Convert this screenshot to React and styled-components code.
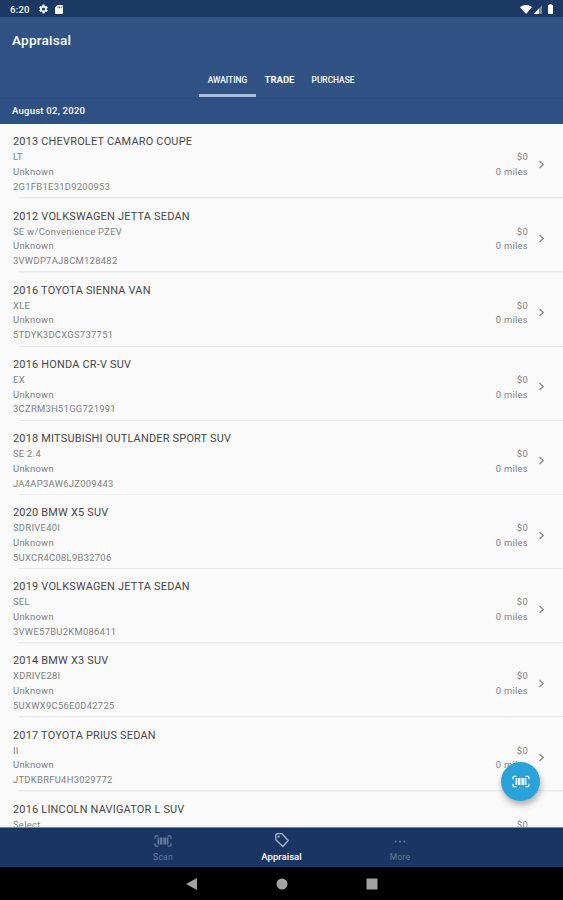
import React from 'react'
import styled, { createGlobalStyle, css } from 'styled-components'

const GlobalStyle = createGlobalStyle`
    body {
        margin: 0;
        background-color: #fafafa;
        font-family: Roboto, sans-serif;
    }
`

const Screen = styled.div`
    width: 563px;
    height: 900px;
    display: flex;
    flex-direction: column;
    overflow: hidden;
    position: relative;
`

const StatusBar = styled.div`
    height: 17px;
    flex: none;
    box-sizing: border-box;
    padding: 1px 9px 0 10px;
    display: flex;
    align-items: center;
    background-color: #1b3764;
    color: #fff;
    font-size: 9.6px;
    font-weight: 500;
    letter-spacing: 0.2px;
`

const StatusIcons = styled.div`
    display: flex;
    align-items: center;
    gap: ${props => props.gap};
    margin-left: ${props => props.offset};
`

const Header = styled.header`
    height: 80px;
    flex: none;
    display: flex;
    flex-direction: column;
    background-color: #305285;
    color: #fff;
`

const Title = styled.h1`
    margin: 0;
    padding-left: 12px;
    height: 48px;
    line-height: 47px;
    font-size: 13.6px;
    font-weight: 500;
    letter-spacing: 0.2px;
`

const Tabs = styled.div`
    height: 32px;
    display: flex;
    justify-content: center;
    padding-right: 1px;
`

const Tab = styled.div`
    box-sizing: border-box;
    width: ${props => props.width};
    height: 32px;
    line-height: 30px;
    text-align: center;
    font-size: 8.4px;
    font-weight: 500;
    white-space: nowrap;
    border-bottom: 3px solid transparent;

    ${props => props.active && css`
        border-bottom-color: #adbcd5;
    `}

    ${props => props.strong && css`
        font-weight: 700;
        font-size: 9.5px;
    `}
`

const DateHeader = styled.div`
    height: 27px;
    flex: none;
    box-sizing: border-box;
    padding-left: 12px;
    line-height: 26px;
    background-color: #2f5084;
    border-top: 1px solid #2b4c80;
    color: #fff;
    font-size: 9.6px;
    font-weight: 500;
    letter-spacing: 0.2px;
`

const List = styled.div`
    flex: 1;
    min-height: 0;
    box-sizing: border-box;
    padding-top: 0.6px;
    overflow: hidden;
    background-color: #fafafa;
`

const Row = styled.div`
    height: 74.15px;
    box-sizing: border-box;
    padding: 9.8px 18px 0 13px;
    display: flex;
    background: linear-gradient(#ebebeb, #ebebeb) 19px 100% / 100% 1.5px no-repeat;
    color: #808080;
    font-size: 9.4px;
    line-height: 14.8px;
    letter-spacing: 0.3px;
`

const Vehicle = styled.div`
    flex: 1;
    white-space: nowrap;
`

const Name = styled.div`
    height: 16px;
    line-height: 16px;
    color: #484848;
    font-size: 10.95px;
    letter-spacing: 0.2px;
`

const Values = styled.div`
    padding-top: 16px;
    margin-right: 10px;
    text-align: right;
`

const Chevron = styled.svg`
    width: 7px;
    height: 9px;
    margin-top: 25.5px;
    fill: none;
    stroke: #858585;
    stroke-width: 1.3;
`

const ScanButton = styled.button`
    position: absolute;
    left: 501px;
    top: 762px;
    width: 39px;
    height: 39px;
    padding: 0;
    border: none;
    border-radius: 50%;
    display: flex;
    align-items: center;
    justify-content: center;
    background-color: #29a3da;
    color: #e9f6fc;
    box-shadow: 1px 4px 6px rgba(0, 0, 0, 0.3);
`

const BottomNav = styled.nav`
    height: 40px;
    flex: none;
    box-sizing: border-box;
    border-top: 1px solid #7487a8;
    display: flex;
    justify-content: center;
    background-color: #1a3563;
`

const NavItem = styled.div`
    width: 118.5px;
    padding-top: 4px;
    display: flex;
    flex-direction: column;
    align-items: center;
    color: #64789c;
    font-size: 8.6px;
    line-height: 12px;
    letter-spacing: 0.2px;

    svg {
        height: 18px;
        margin-bottom: 1px;
    }

    ${props => props.active && css`
        color: #fff;
        font-size: 9.6px;
        font-weight: 500;
        letter-spacing: 0;

        svg {
            color: #a9b6cc;
        }
    `}
`

const SystemNav = styled.div`
    height: 33px;
    flex: none;
    box-sizing: border-box;
    display: flex;
    align-items: center;
    justify-content: center;
    gap: 78px;
    background-color: #000;
    color: #a3a3a3;
`

const vehicles = [
    { name: '2013 CHEVROLET CAMARO COUPE', trim: 'LT', vin: '2G1FB1E31D9200953' },
    { name: '2012 VOLKSWAGEN JETTA SEDAN', trim: 'SE w/Convenience PZEV', vin: '3VWDP7AJ8CM128482' },
    { name: '2016 TOYOTA SIENNA VAN', trim: 'XLE', vin: '5TDYK3DCXGS737751' },
    { name: '2016 HONDA CR-V SUV', trim: 'EX', vin: '3CZRM3H51GG721991' },
    { name: '2018 MITSUBISHI OUTLANDER SPORT SUV', trim: 'SE 2.4', vin: 'JA4AP3AW6JZ009443' },
    { name: '2020 BMW X5 SUV', trim: 'SDRIVE40I', vin: '5UXCR4C08L9B32706' },
    { name: '2019 VOLKSWAGEN JETTA SEDAN', trim: 'SEL', vin: '3VWE57BU2KM086411' },
    { name: '2014 BMW X3 SUV', trim: 'XDRIVE28I', vin: '5UXWX9C56E0D42725' },
    { name: '2017 TOYOTA PRIUS SEDAN', trim: 'II', vin: 'JTDKBRFU4H3029772' },
    { name: '2016 LINCOLN NAVIGATOR L SUV', trim: 'Select' },
]

function BarcodeIcon({ width = 18, height = 13 }) {
    return (
        <svg width={width} height={height} viewBox="0 0 17 12" fill="none" stroke="currentColor">
            <path d="M1 3.8V2.2q0-1 1-1h2.200M12.800 1.200H15q1 0 1 1v1.600M16 8.200v1.600q0 1-1 1h-2.200M4.200 10.800H2q-1 0-1-1V8.200" strokeWidth="1.2" />
            <path d="M4.100 2.800v6.400M12.900 2.800v6.400" strokeWidth="1.400" />
            <path d="M6.500 2.800v6.400M10.600 2.800v6.400" strokeWidth="2.200" />
            <path d="M8.600 2.800v6.400" strokeWidth="1" />
        </svg>
    )
}

function GearIcon() {
    return (
        <svg width="12" height="12" viewBox="0 0 24 24" fill="currentColor">
            <path fillRule="evenodd" d="M19.4 13a7.8 7.8 0 0 0 0-2l2.1-1.6-2-3.5-2.5 1a7.6 7.6 0 0 0-1.7-1L15 3.2h-4l-.5 2.7a7.6 7.6 0 0 0-1.7 1l-2.5-1-2 3.5L6.4 11a7.8 7.8 0 0 0 0 2l-2.1 1.6 2 3.5 2.5-1a7.6 7.6 0 0 0 1.7 1l.5 2.7h4l.4-2.7a7.6 7.6 0 0 0 1.7-1l2.5 1 2-3.5zM13 15.2a3.2 3.2 0 1 1 0-6.4 3.2 3.2 0 0 1 0 6.4z" />
        </svg>
    )
}

function VehicleRow({ name, trim, vin }) {
    return (
        <Row>
            <Vehicle>
                <Name>{name}</Name>
                <div>{trim}</div>
                {vin && <div>Unknown</div>}
                {vin && <div>{vin}</div>}
            </Vehicle>
            <Values>
                <div>$0</div>
                {vin && <div>0 miles</div>}
            </Values>
            <Chevron viewBox="0 0 7 9">
                <path d="M1.5 1l3.7 3.5L1.5 8" />
            </Chevron>
        </Row>
    )
}

export default function App() {
    return (
        <Screen>
            <GlobalStyle />
            <StatusBar>
                6:20
                <StatusIcons gap="6px" offset="7px">
                    <GearIcon />
                    <svg width="8" height="9" viewBox="0 0 8 9" fill="currentColor">
                        <path fillRule="evenodd" d="M2.6 0H7a1 1 0 0 1 1 1v7a1 1 0 0 1-1 1H1a1 1 0 0 1-1-1V2.6zM2.6 1.4v1.8h.8V1.4zM4.2 1.4v1.8H5V1.4zM5.8 1.4v1.8h.8V1.4z" />
                    </svg>
                </StatusIcons>
                <StatusIcons gap="2px" offset="auto">
                    <svg width="12" height="9" viewBox="0 0 12 9" fill="currentColor">
                        <path d="M0 2.2C3.5-.7 8.5-.7 12 2.2L6 9z" />
                    </svg>
                    <svg width="8" height="9" viewBox="0 0 8 9" fill="currentColor">
                        <path d="M8 0v9H0z" opacity="0.4" />
                        <path d="M5 3.4V9H0z" />
                    </svg>
                    <svg width="10" height="10" viewBox="0 0 10 10" fill="currentColor">
                        <path d="M5.5 0h2v1H9v9H4V1h1.5z" />
                    </svg>
                </StatusIcons>
            </StatusBar>
            <Header>
                <Title>Appraisal</Title>
                <Tabs>
                    <Tab active width="57px">AWAITING</Tab>
                    <Tab strong width="47px">TRADE</Tab>
                    <Tab width="60px">PURCHASE</Tab>
                </Tabs>
            </Header>
            <DateHeader>August 02, 2020</DateHeader>
            <List>
                {vehicles.map(vehicle => <VehicleRow key={vehicle.name} {...vehicle} />)}
            </List>
            <BottomNav>
                <NavItem>
                    <BarcodeIcon height={18} />
                    Scan
                </NavItem>
                <NavItem active>
                    <svg width="16" viewBox="0 0 16 18" fill="none" stroke="currentColor" strokeWidth="1.3" strokeLinejoin="round">
                        <path d="M2.8 1.7H8l6.200 6.800-5.400 6L1.800 7.800V2.700z" />
                        <circle cx="4.6" cy="4.6" r="0.5" />
                    </svg>
                    Appraisal
                </NavItem>
                <NavItem>
                    <svg width="12" viewBox="0 0 12 18" fill="currentColor">
                        <circle cx="1.5" cy="9.5" r="1" />
                        <circle cx="6" cy="9.5" r="1" />
                        <circle cx="10.5" cy="9.5" r="1" />
                    </svg>
                    More
                </NavItem>
            </BottomNav>
            <SystemNav>
                <svg width="12" height="12" viewBox="0 0 12 12" fill="currentColor"><path d="M11 0v12L0 6z" /></svg>
                <svg width="12" height="12" viewBox="0 0 12 12" fill="currentColor"><circle cx="6" cy="6" r="5.5" /></svg>
                <svg width="12" height="12" viewBox="0 0 12 12" fill="currentColor"><rect x="0.5" y="0.5" width="11" height="11" rx="0.5" /></svg>
            </SystemNav>
            <ScanButton>
                <BarcodeIcon />
            </ScanButton>
        </Screen>
    )
}
